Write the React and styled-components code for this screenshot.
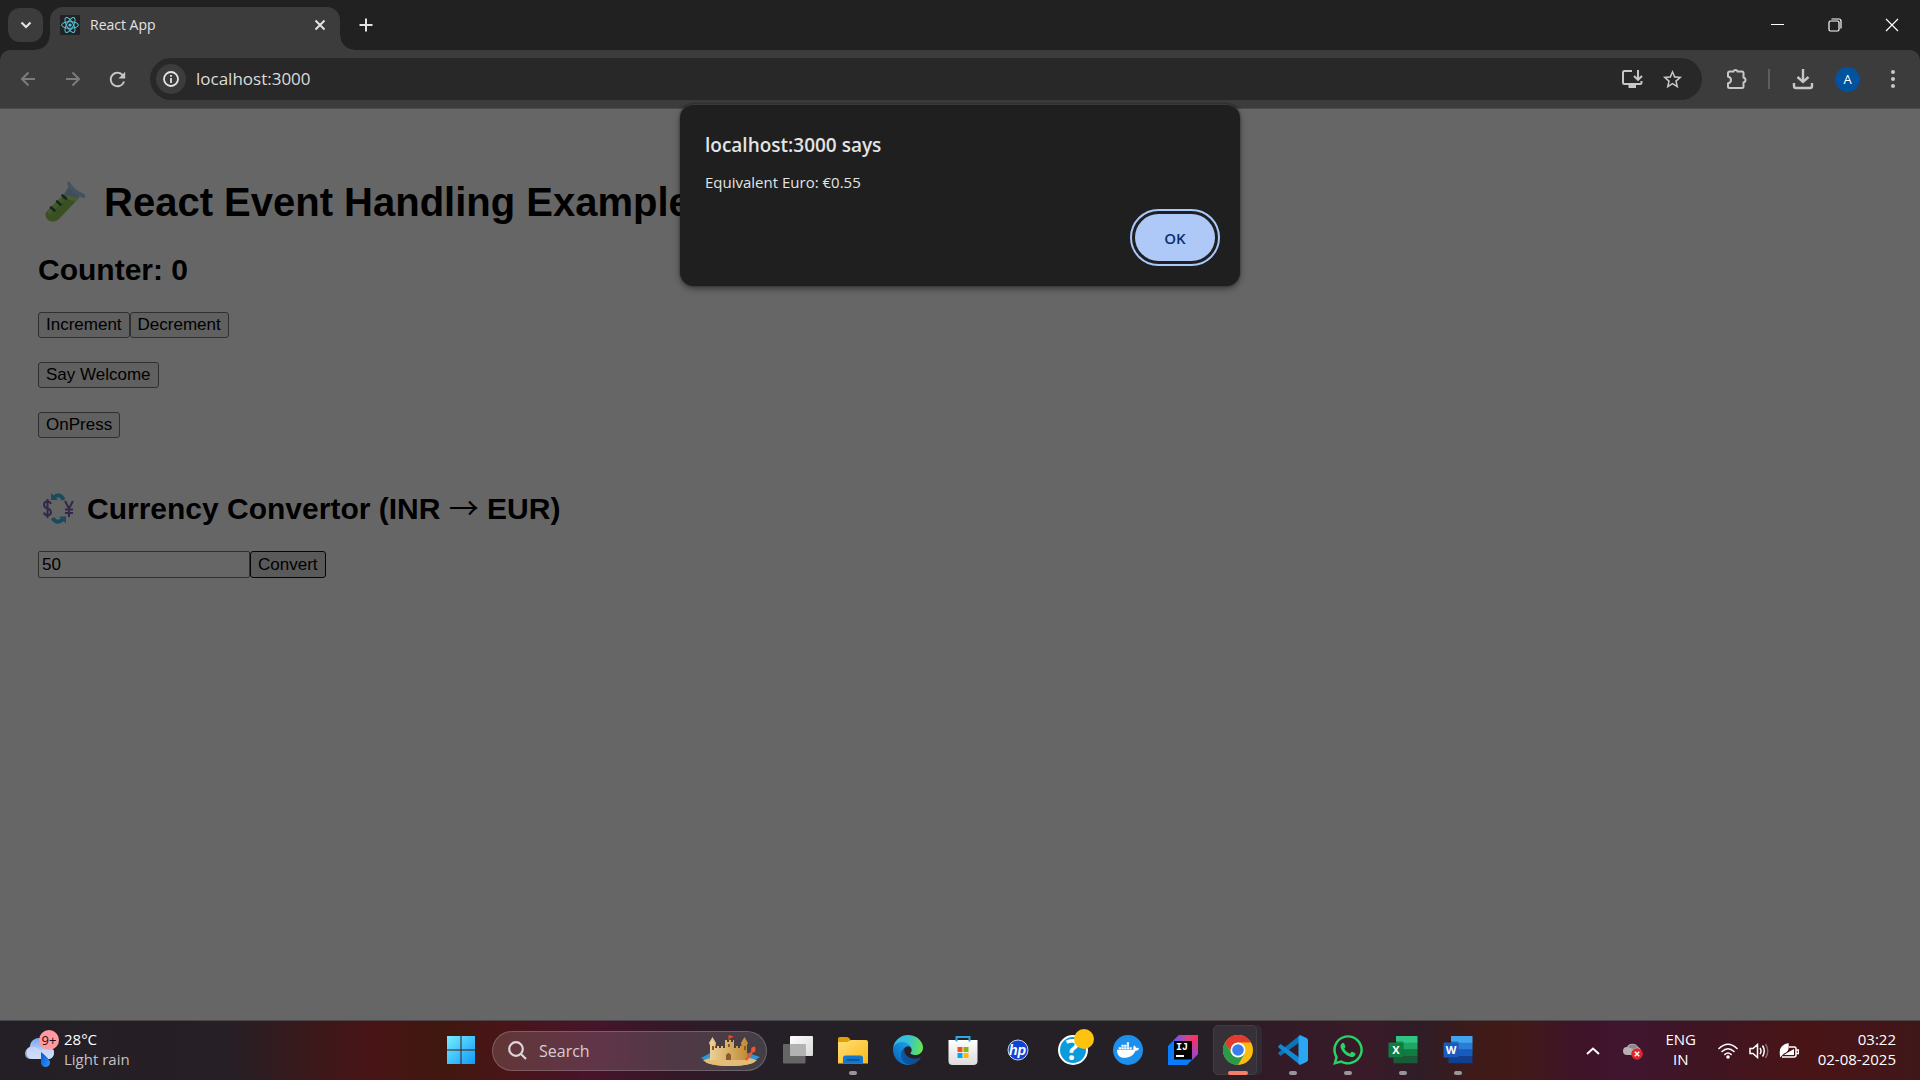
import React, { useState } from "react";
import styled, { createGlobalStyle, css } from "styled-components";
import { MdRefresh, MdStarBorder } from "react-icons/md";
import { FaWhatsapp, FaDocker } from "react-icons/fa";

const ui = `"Segoe UI", "Open Sans", "Noto Sans", sans-serif`;
const arial = `"Liberation Sans", Arial, sans-serif`;

const GlobalStyle = createGlobalStyle`
  *, *::before, *::after { box-sizing: border-box; }
  body { margin: 0; background: #202120; }
  button, input { font: inherit; }
  h1, h2, p { margin: 0; }
  svg { display: block; flex: none; }
`;

const Screen = styled.div`
  min-height: 100vh;
  display: flex;
  flex-direction: column;
  font-family: ${ui};
  font-size: 15px;
  color: #e3e3e3;
`;

const plainButton = css`
  border: 0;
  padding: 0;
  background: none;
  color: inherit;
  display: flex;
  align-items: center;
  justify-content: center;
`;

/* ---------- browser frame ---------- */

const TabStrip = styled.header`
  height: 50px;
  display: flex;
  align-items: flex-start;
  background: #202120;
`;

const TabSearch = styled.button`
  ${plainButton}
  width: 35px;
  height: 34px;
  margin: 8px 7px 0 8px;
  border-radius: 12px;
  background: #3c3c3c;
`;

const Tab = styled.div`
  position: relative;
  width: 290px;
  height: 43px;
  margin-top: 7px;
  padding: 0 8px 7px 10px;
  display: flex;
  align-items: center;
  gap: 10px;
  border-radius: 13px 13px 0 0;
  background: #3c3c3c;

  &::before,
  &::after {
    content: "";
    position: absolute;
    bottom: 0;
    width: 14px;
    height: 14px;
  }
  &::before {
    right: 100%;
    background: radial-gradient(circle at 0 0, transparent 13px, #3c3c3c 14px);
  }
  &::after {
    left: 100%;
    background: radial-gradient(circle at 100% 0, transparent 13px, #3c3c3c 14px);
  }
`;

const TabTitle = styled.span`
  flex: 1;
  font-size: 14px;
  line-height: 20px;
`;

const SmallButton = styled.button`
  ${plainButton}
  width: 24px;
  height: 24px;
`;

const NewTab = styled.button`
  ${plainButton}
  width: 34px;
  height: 34px;
  margin: 8px 0 0 9px;
`;

const WindowControls = styled.div`
  display: flex;
  margin-left: auto;
  height: 49px;
`;

const WindowButton = styled.button`
  ${plainButton}
  width: 57px;
  color: #fff;
`;

const ToolbarWrap = styled.div`
  background: #202120;
`;

const Toolbar = styled.nav`
  height: 59px;
  padding: 0 5px;
  display: flex;
  align-items: center;
  background: #3c3c3c;
  border-bottom: 1px solid #4b4b4b;
  border-radius: 10px 10px 0 0;
`;

const ToolButton = styled.button`
  ${plainButton}
  width: ${(p) => (p.$narrow ? 40 : 45)}px;
  height: 40px;
  color: ${(p) => (p.$off ? "#7c7c7c" : "#c7c7c7")};
`;

const Omnibox = styled.div`
  flex: 1;
  height: 42px;
  margin: 0 12px 0 10px;
  padding: 0 10px 0 6px;
  display: flex;
  align-items: center;
  border-radius: 21px;
  background: #282828;
`;

const SiteInfo = styled.button`
  ${plainButton}
  width: 30px;
  height: 30px;
  border-radius: 50%;
  background: #3c3c3c;
`;

const Address = styled.input`
  flex: 1;
  min-width: 0;
  margin-left: 10px;
  padding: 0;
  border: 0;
  outline: 0;
  background: none;
  color: #dcdcdc;
  font-size: 17px;
  line-height: 24px;
`;

const Divider = styled.span`
  width: 2px;
  height: 20px;
  margin: 0 10px 0 9px;
  background: #5e5e5e;
`;

const Avatar = styled.span`
  width: 25px;
  height: 25px;
  border-radius: 50%;
  background: #00539c;
  color: #fff;
  font-size: 13px;
  line-height: 25px;
  text-align: center;
`;

/* ---------- web page ---------- */

const Viewport = styled.main`
  position: relative;
  flex: 1;
  background: #fff;
`;

const PageBody = styled.div`
  padding: 69px 38px;
  color: #000;
  font-family: ${arial};
`;

const Title = styled.h1`
  display: flex;
  align-items: center;
  gap: 10px;
  margin-bottom: 27px;
  font-size: 40px;
  line-height: 48px;
`;

const Heading = styled.h2`
  display: flex;
  align-items: center;
  gap: 7px;
  margin-bottom: 25px;
  font-size: 30px;
  line-height: 34px;
`;

const Arrow = styled.span`
  font-family: "Noto Sans CJK JP", ${arial};
  font-weight: 400;
  line-height: 1;
`;

const ButtonRows = styled.div`
  display: flex;
  flex-direction: column;
  gap: 24px;
  margin-bottom: 53px;
`;

const Row = styled.div`
  display: flex;
`;

const PageButton = styled.button`
  min-height: 26px;
  padding: 0 7px;
  border: 1px solid ${(p) => (p.$focus ? "#101010" : "#767676")};
  border-radius: 3px;
  background: ${(p) => (p.$focus ? "#e0e0e0" : "#efefef")};
  color: #000;
  font-size: 17px;
  line-height: 24px;
`;

const AmountInput = styled.input`
  width: 212px;
  height: 27px;
  padding: 0 3px;
  border: 1px solid #767676;
  border-radius: 2px;
  background: #fff;
  color: #000;
  font-size: 17px;
`;

const Scrim = styled.div`
  position: absolute;
  inset: 0;
  background: rgba(0, 0, 0, 0.6);
`;

const DialogLayer = styled.div`
  position: absolute;
  inset: -5px 0 auto;
  display: flex;
  justify-content: center;
`;

const Dialog = styled.div`
  width: 560px;
  padding: 28px 25px 25px;
  display: flex;
  flex-direction: column;
  border-radius: 14px;
  background: #1f1f1f;
  box-shadow: 0 0 2px rgba(0, 0, 0, 0.5), 0 3px 6px rgba(0, 0, 0, 0.4);
  border-top: 1px solid #3a3a3a;
`;

const DialogTitle = styled.h2`
  font-size: 19px;
  line-height: 24px;
  font-weight: 600;
`;

const DialogText = styled.p`
  margin-top: 15px;
  font-size: 15px;
  line-height: 20px;
`;

const OkButton = styled.button`
  align-self: flex-end;
  width: 80px;
  height: 47px;
  margin-top: 22px;
  border: 0;
  border-radius: 24px;
  background: #aec9f8;
  color: #0a2e6e;
  font-size: 15px;
  font-weight: 600;
  outline: 2px solid #a8c7fa;
  outline-offset: 3px;
`;

/* ---------- taskbar ---------- */

const Taskbar = styled.footer`
  height: 60px;
  display: grid;
  grid-template-columns: 1fr auto 1fr;
  border-top: 1px solid #484648;
  background: linear-gradient(
    90deg,
    #241f26 0%,
    #261f25 12%,
    #3a191b 16%,
    #491416 19.5%,
    #40180f 23%,
    #491517 26%,
    #47142b 31%,
    #341827 35%,
    #252027 40%,
    #242026 62%,
    #301b26 66%,
    #3a1a28 71%,
    #2f1d26 74%,
    #3f1a18 77%,
    #421a17 79%,
    #3f1428 82%,
    #40152f 85%,
    #3f1522 89%,
    #4a1416 94%,
    #3f171a 100%
  );
  color: #fff;
`;

const Weather = styled.button`
  ${plainButton}
  justify-self: start;
  padding: 0 0 0 24px;
  gap: 5px;
  text-align: left;
`;

const TwoLines = styled.span`
  display: flex;
  flex-direction: column;
  padding-bottom: 4px;
  font-size: 15px;
  line-height: 20px;
  text-align: ${(p) => p.$align || "left"};
`;

const Muted = styled.span`
  color: #c6c1c4;
`;

const Apps = styled.div`
  display: flex;
  align-items: center;
  padding-right: 2px;
`;

const AppButton = styled.button`
  ${plainButton}
  position: relative;
  width: 55px;
  height: 59px;
  padding-bottom: 1px;

  &::after {
    content: "";
    display: ${(p) => (p.$running || p.$active ? "block" : "none")};
    position: absolute;
    bottom: 5px;
    left: 50%;
    width: ${(p) => (p.$active ? 20 : 8)}px;
    height: 4px;
    border-radius: 2px;
    transform: translateX(-50%);
    background: ${(p) => (p.$active ? "#f57f68" : "#9a9599")};
  }
`;

const ActiveTile = styled.span`
  position: absolute;
  left: 3px;
  top: 4px;
  width: 44px;
  height: 50px;
  border: 1px solid #423c43;
  border-radius: 5px;
  background: #363138;
  box-shadow: 5px 0 0 #302b32;
`;

const AppArt = styled.span`
  position: relative;
`;

const SearchBox = styled.label`
  width: 275px;
  height: 40px;
  margin: 0 3px 0 4px;
  padding: 0 6px 0 15px;
  display: flex;
  align-items: center;
  gap: 12px;
  border: 1px solid rgba(255, 255, 255, 0.2);
  border-radius: 20px;
  background: rgba(255, 255, 255, 0.14);
`;

const SearchInput = styled.input`
  flex: 1;
  min-width: 0;
  padding: 0;
  border: 0;
  outline: 0;
  background: none;
  color: #fff;
  font-size: 16px;

  &::placeholder {
    color: #d6cdd3;
    opacity: 1;
  }
`;

const Tray = styled.div`
  justify-self: end;
  display: flex;
  align-items: center;
  padding-right: 24px;
`;

const TrayButton = styled.button`
  ${plainButton}
  width: ${(p) => p.$w}px;
  height: 50px;
`;

const Clock = styled.button`
  ${plainButton}
  padding-left: 8px;
  height: 50px;
`;

/* ---------- small icons ---------- */

const Line = ({ w = 20, h = w, box, d, s = 2, children, ...rest }) => (
  <svg width={w} height={h} viewBox={box || `0 0 ${w} ${h}`} fill="none" stroke="currentColor" strokeWidth={s} aria-hidden="true" {...rest}>
    {d && <path d={d} />}
    {children}
  </svg>
);

const ReactMark = () => (
  <svg width="20" height="20" viewBox="0 0 20 20" aria-hidden="true">
    <rect width="20" height="20" rx="1" fill="#222" />
    <g fill="none" stroke="#58c4dc" strokeWidth="1">
      <ellipse cx="10" cy="10" rx="8.4" ry="3.3" />
      <ellipse cx="10" cy="10" rx="8.4" ry="3.3" transform="rotate(60 10 10)" />
      <ellipse cx="10" cy="10" rx="8.4" ry="3.3" transform="rotate(120 10 10)" />
    </g>
    <circle cx="10" cy="10" r="1.6" fill="#58c4dc" />
  </svg>
);

const TestTube = () => (
  <svg width="56" height="48" viewBox="0 0 56 48" aria-hidden="true">
    <path d="M31 8 L43 17 L39 22 L25 18 Z" fill="#9fc4e4" />
    <path d="M26 17 L41 20 L21 41 Q15 46 10 42 Q5 37 10 32 Z" fill="#92c859" />
    <path d="M26 17 L41 20 L38 23.500 L23.500 19.500 Z" fill="#bfe486" />
    <path d="M10 32 L22 20 L26 22 L12 37 Q9 36 10 32 Z" fill="#a9da6c" />
    <path d="M29.5 4 Q31.500 2.500 33 6 Q36 11 43 14.500 Q48.500 16.500 47 19.500 Q45 21 40 17.500 Q33 14 31 9 Q28.500 6 29.500 4 Z" fill="#a9cbf2" />
    <path d="M24.500 17.500 l3.500 3 M19 23.500 l3.500 3 M13 29.500 l3.500 3" stroke="#27615a" strokeWidth="2.600" strokeLinecap="round" />
  </svg>
);

const CurrencyMark = () => (
  <svg width="42" height="34" viewBox="0 0 42 34" aria-hidden="true">
    <g fill="none" stroke="#46b8e8" strokeWidth="4">
      <path d="M15.500 5.500 Q22 0 25.500 8" />
      <path d="M25 27 Q19 33 14.500 26" />
    </g>
    <path d="M13 1 V8 H20 Z M28 31.500 V24.500 H21 Z" fill="#46b8e8" />
    <path d="M13 12 Q12 9.500 9.500 9.500 Q6 9.500 6 12.800 Q6 15.500 9.500 16.500 Q13 17.500 13 20.200 Q13 23.200 9.500 23.200 Q6.500 23.200 6 20.500 M9.500 7 V26" fill="none" stroke="#7c66b4" strokeWidth="2" />
    <path d="M27 9 L31 16.500 L35 9 M31 16 V25 M27 17.500 H35 M27 21 H35" fill="none" stroke="#7c66b4" strokeWidth="2" />
  </svg>
);

/* ---------- taskbar art ---------- */

const Art = ({ children, size = 30, box = "0 0 30 30" }) => (
  <svg width={size} height={size} viewBox={box} aria-hidden="true">{children}</svg>
);

const WeatherArt = () => (
  <svg width="35" height="44" viewBox="0 0 35 44" aria-hidden="true">
    <defs>
      <linearGradient id="cloud" x1="0" y1="0" x2="0" y2="1"><stop offset="0" stopColor="#7ea6ee" /><stop offset="1" stopColor="#dfe8fb" /></linearGradient>
      <linearGradient id="drop" x1="0" y1="0" x2="1" y2="1"><stop offset="0" stopColor="#0c50d0" /><stop offset="1" stopColor="#2a98ff" /></linearGradient>
    </defs>
    <path d="M7 30 a7 7 0 0 1 -1 -12.500 a8.500 8.500 0 0 1 13 -7 q7 0 8 8.500 a6 6 0 0 1 -2 11 Z" fill="url(#cloud)" />
    <path d="M1 24 q1 -7 9 -6 q5 1 7 4 q6 -4 13 -1 q1 8 -6 9 H7 q-6 0 -6 -6 Z" fill="#cbdaf8" opacity=".75" />
    <path d="M17 23 Q26 30 26 33.500 a4.500 4.500 0 0 1 -9 0 Z" fill="url(#drop)" />
    <circle cx="25" cy="11" r="10" fill="#ff9aa2" />
    <text x="25" y="15.500" textAnchor="middle" fontSize="13" fill="#1c1014" fontFamily='"Open Sans", sans-serif'>9+</text>
  </svg>
);

const StartArt = () => (
  <Art>
    <defs><linearGradient id="win" x1="0" y1="0" x2="30" y2="30" gradientUnits="userSpaceOnUse"><stop offset="0" stopColor="#7af0ff" /><stop offset="1" stopColor="#0a96fa" /></linearGradient></defs>
    <path fill="url(#win)" d="M1 1h13.500v13.500H1zM15.500 1H29v13.500H15.500zM1 15.500h13.500V29H1zM15.500 15.500H29V29H15.500z" />
  </Art>
);

const CastleArt = () => (
  <svg width="60" height="32" viewBox="0 0 60 32" aria-hidden="true">
    <defs><linearGradient id="sand" x1="0" y1="0" x2="1" y2="0"><stop offset="0" stopColor="#ecd39a" /><stop offset="1" stopColor="#c08a35" /></linearGradient></defs>
    <path d="M1 23 L12 17 L48 18 L60 22 L52 27 H8 Z" fill="#2f94d8" />
    <ellipse cx="30" cy="26" rx="25" ry="5" fill="#d9b06a" />
    <path d="M3 25 q27 -6 54 0 q-6 6 -27 6 t-27 -6 Z" fill="#e3bd78" />
    <path d="M10 25 V10 L9 8 L12.500 2 L16 8 L15 13 H17 V11 H19 V13 H21 V11 H23 V13 H25 V5 H27 V7 H29 V5 H31 V7 H33 V5 H34 V13 H36 V11 H38 V13 H40 V11 H42 V13 L41 8 L44.500 2 L48 8 L47 10 V25 Z" fill="url(#sand)" />
    <path d="M26 25 v-5 q2.500 -4 5 0 v5 Z M28 9 h2 v3 h-2 Z M12 11 h2 v4 h-2 Z M44 11 h2 v4 h-2 Z" fill="#8b5b2c" />
    <path d="M28.500 5 V0 L34 1.500 L29.500 3.500 V5 Z" fill="#ee4b2b" />
    <path d="M55 11.500 q-4 0 -4 3.500 q0 2.500 2 2.500 q2.500 0 2.500 -3 Z" fill="#f0532d" />
    <path d="M52 17 L46 25" fill="none" stroke="#f0532d" strokeWidth="2.500" />
  </svg>
);

const TaskViewArt = () => (
  <Art>
    <defs><linearGradient id="tv" x1="0" y1="0" x2="1" y2="1"><stop offset="0" stopColor="#fff" /><stop offset="1" stopColor="#d8d8d8" /></linearGradient></defs>
    <rect x="7" y="1" width="23" height="20" rx="1" fill="url(#tv)" />
    <rect x="0" y="9" width="22.500" height="19.500" rx="1" fill="#777" opacity=".8" />
    <rect x="7" y="9" width="15.500" height="12" fill="#b2b2b2" />
  </Art>
);

const ExplorerArt = () => (
  <Art>
    <defs><linearGradient id="fold" x1="0" y1="0" x2="1" y2="1"><stop offset="0" stopColor="#ffdf78" /><stop offset="1" stopColor="#fbb917" /></linearGradient></defs>
    <path d="M0 4 q0 -2 2 -2 h7 q1.500 0 2.500 1.500 L13 6 V9 H0 Z" fill="#e0a000" />
    <path d="M0 7 H9 L13 5 H28 q2 0 2 2 V28.500 H0 Z" fill="url(#fold)" />
    <path d="M5 28.500 V23 q0 -2.500 2.500 -2.500 h15 q2.500 0 2.500 2.500 v5.500 Z" fill="#1278cd" />
    <path d="M9 25 h12" stroke="#0a4d8f" strokeWidth="1.500" strokeLinecap="round" />
  </Art>
);

const EdgeArt = () => (
  <Art box="0 0 256 256">
    <defs>
      <linearGradient id="e1" x1="63" y1="178" x2="241" y2="178" gradientUnits="userSpaceOnUse"><stop offset="0" stopColor="#0c59a4" /><stop offset="1" stopColor="#114a8b" /></linearGradient>
      <linearGradient id="e2" x1="150" y1="100" x2="40" y2="220" gradientUnits="userSpaceOnUse"><stop offset="0" stopColor="#1b9de2" /><stop offset="1" stopColor="#0a6bc4" /></linearGradient>
      <linearGradient id="e3" x1="20" y1="60" x2="250" y2="110" gradientUnits="userSpaceOnUse"><stop offset="0" stopColor="#35b8e8" /><stop offset=".5" stopColor="#36c5cf" /><stop offset="1" stopColor="#66e552" /></linearGradient>
    </defs>
    <g transform="translate(-4.630 -4.920)">
      <path fill="url(#e1)" d="M235.68 195.46a93.73 93.73 0 0 1-10.54 4.71 101.87 101.87 0 0 1-35.9 6.46c-47.32 0-88.54-32.55-88.54-74.32A31.48 31.48 0 0 1 117.13 105c-42.8 1.8-53.8 46.4-53.8 72.53 0 73.88 68.09 81.37 82.76 81.37 7.91 0 19.84-2.3 27-4.56l1.31-.44a128.34 128.34 0 0 0 66.6-52.8 4 4 0 0 0-5.320-5.640z" />
      <path fill="url(#e2)" d="M110.34 246.34A79.2 79.2 0 0 1 87.6 225a80.72 80.72 0 0 1 29.53-120c3.12-1.47 8.45-4.13 15.54-4a32.35 32.35 0 0 1 25.69 13 31.88 31.88 0 0 1 6.36 18.66c0-.21 24.46-79.6-80-79.6-43.9 0-80 41.66-80 78.21a130.15 130.15 0 0 0 12.11 56 128 128 0 0 0 156.38 67.11 75.55 75.55 0 0 1-62.78-8z" />
      <path fill="url(#e3)" d="M156.94 153.78c-.81 1.05-3.3 2.5-3.3 5.66 0 2.61 1.7 5.12 4.72 7.23 14.38 10 41.49 8.68 41.56 8.68a59.56 59.56 0 0 0 30.27-8.35 61.38 61.38 0 0 0 30.43-52.88c.26-22.41-8-37.31-11.34-43.91C228.09 28.76 182.35 4.92 132.63 4.92a128 128 0 0 0-128 126.2c.48-36.54 36.8-66.05 80-66.05 3.5 0 23.46.34 42 10.07 16.34 8.58 24.9 18.94 30.85 29.21 6.18 10.67 7.28 24.15 7.28 29.52s-2.740 13.330-7.800 19.910z" />
    </g>
  </Art>
);

const StoreArt = () => (
  <Art>
    <defs><linearGradient id="bag" x1="0" y1="0" x2="0" y2="1"><stop offset="0" stopColor="#fff" /><stop offset="1" stopColor="#dcdcdc" /></linearGradient></defs>
    <path d="M.5 5 H29.500 V26 q0 4 -4 4 H4.500 q-4 0 -4 -4 Z" fill="url(#bag)" />
    <path d="M8.500 6.500 V2 H21.500 V6.500" fill="none" stroke="#2ba9e6" strokeWidth="2" />
    <rect x="9.500" y="12" width="5" height="5" fill="#f25022" /><rect x="15.500" y="12" width="5" height="5" fill="#7fba00" />
    <rect x="9.500" y="18" width="5" height="5" fill="#00a4ef" /><rect x="15.500" y="18" width="5" height="5" fill="#ffb900" />
  </Art>
);

const HpArt = () => (
  <Art>
    <circle cx="15" cy="15" r="10" fill="#0f43d8" stroke="#c9d4f2" />
    <text x="14.500" y="19.500" textAnchor="middle" fontSize="14" fontStyle="italic" fontWeight="700" fill="#fff" fontFamily='"Liberation Sans Narrow", "Liberation Sans", sans-serif'>hp</text>
  </Art>
);

const HelpArt = () => (
  <Art size={42} box="-6 -6 42 42">
    <circle cx="15" cy="15" r="14" fill="#0a9bdc" stroke="#fff" strokeWidth="2" />
    <text x="14.500" y="25" textAnchor="middle" fontSize="28" fontWeight="700" fill="#fff" fontFamily='"Open Sans", sans-serif'>?</text>
    <circle cx="26" cy="4" r="10" fill="#ffc20e" />
  </Art>
);

const DockerArt = () => (
  <Art>
    <circle cx="15" cy="15" r="15" fill="#1d8fec" />
    <FaDocker x="4" y="4" size="22" color="#fff" />
  </Art>
);

const IdeaArt = () => (
  <Art>
    <defs>
      <linearGradient id="ij" x1="8" y1="8" x2="30" y2="4" gradientUnits="userSpaceOnUse"><stop offset="0" stopColor="#6b57f5" /><stop offset=".6" stopColor="#e0407f" /><stop offset="1" stopColor="#ff2d5a" /></linearGradient>
      <linearGradient id="ij2" x1="0" y1="0" x2="0" y2="1"><stop offset="0" stopColor="#ff2d5a" /><stop offset="1" stopColor="#8a4be0" /></linearGradient>
    </defs>
    <path d="M11 0 H30 V19 L19 30 H0 V11 Z" fill="#087cfa" />
    <path d="M11 0 H30 V10 L6 8 V5 Z" fill="url(#ij)" />
    <path d="M24 5 L30 2 V19 L24 25 Z" fill="url(#ij2)" />
    <rect x="6" y="6" width="18" height="18.500" fill="#000" />
    <text x="8" y="15" fontSize="10" fontWeight="700" fill="#fff" fontFamily='"Liberation Mono", monospace'>IJ</text>
    <rect x="8" y="20" width="8" height="2" fill="#fff" />
  </Art>
);

const ChromeArt = () => (
  <Art>
    <circle cx="15" cy="15" r="15" fill="#fbbc0f" />
    <path d="M2 7.500 A15 15 0 0 0 15 30 L21.500 18.800 L15 18 L8.500 18.800 Z" fill="#2a9a48" />
    <path d="M2 7.500 L9 19 L12 12 L8 8 Z" fill="#2a9a48" />
    <path d="M2 7.500 A15 15 0 0 1 28 7.500 H15 L8.500 11.500 L7.500 16 Z" fill="#e33b2e" />
    <circle cx="15" cy="15" r="7.500" fill="#fff" />
    <circle cx="15" cy="15" r="5.800" fill="#3b7ded" />
  </Art>
);

const CodeArt = () => (
  <Art>
    <path d="M0 18.500 L2.500 21 L22 7 V0 L1 17 Z" fill="#0b73b8" />
    <path d="M0 11.500 L2.500 9 L22 23 V30 L1 13 Z" fill="#1389d2" />
    <path d="M22 0 L28.500 3 Q30 3.800 30 5.500 V24.500 Q30 26.200 28.500 27 L22 30 L20.500 28 V2 Z" fill="#2aa7f2" />
  </Art>
);

const Office = ({ letter, bands, badge }) => (
  <Art>
    {bands.map((c, i) => (
      <rect key={c} x={i === 3 ? 5.5 : 8} y={1 + i * 6.75} width={i === 3 ? 24 : 21.5} height="7" fill={c} />
    ))}
    <rect x="6" y="6" width="9.500" height="17" fill="#000" opacity=".18" />
    <rect x=".500" y="7.500" width="15" height="15" rx="1" fill={badge} />
    <text x="8" y="19" textAnchor="middle" fontSize="11" fontWeight="700" fill="#fff" fontFamily='"Open Sans", sans-serif'>{letter}</text>
  </Art>
);

const apps = [
  { name: "Task View", art: <TaskViewArt /> },
  { name: "File Explorer", art: <ExplorerArt />, running: true },
  { name: "Microsoft Edge", art: <EdgeArt /> },
  { name: "Microsoft Store", art: <StoreArt /> },
  { name: "HP Smart", art: <HpArt /> },
  { name: "Get Help", art: <HelpArt /> },
  { name: "Docker Desktop", art: <DockerArt /> },
  { name: "IntelliJ IDEA", art: <IdeaArt /> },
  { name: "Google Chrome", art: <ChromeArt />, active: true },
  { name: "Visual Studio Code", art: <CodeArt />, running: true },
  { name: "WhatsApp", art: <FaWhatsapp size={34} color="#25d366" />, running: true },
  { name: "Excel", art: <Office letter="X" badge="#107c41" bands={["#2fc481", "#21a366", "#107c41", "#185c37"]} />, running: true },
  { name: "Word", art: <Office letter="W" badge="#185abd" bands={["#41a5ee", "#2b7cd3", "#185abd", "#103f91"]} />, running: true },
];

function BrowserFrame() {
  return (
    <>
      <TabStrip>
        <TabSearch aria-label="Search tabs"><Line w={12} h={8} d="M1.500 1.500 L6 6 L10.500 1.500" s={2.2} /></TabSearch>
        <Tab>
          <ReactMark />
          <TabTitle>React App</TabTitle>
          <SmallButton aria-label="Close tab"><Line w={12} d="M1.500 1.500 L10.500 10.500 M10.500 1.500 L1.500 10.500" s={2} /></SmallButton>
        </Tab>
        <NewTab aria-label="New tab"><Line w={14} d="M7 .500 V13.500 M.500 7 H13.500" s={2} /></NewTab>
        <WindowControls>
          <WindowButton aria-label="Minimize"><Line w={13} h={1} d="M0 .500 H13" s={1} /></WindowButton>
          <WindowButton aria-label="Restore">
            <Line w={14} s={1.2}>
              <rect x="1" y="3" width="10" height="10" rx="1.500" />
              <path d="M3.500 1 H11 Q13 1 13 3 V10.500" />
            </Line>
          </WindowButton>
          <WindowButton aria-label="Close"><Line w={14} d="M1 1 L13 13 M13 1 L1 13" s={1.2} /></WindowButton>
        </WindowControls>
      </TabStrip>
      <ToolbarWrap>
        <Toolbar aria-label="Browser toolbar">
          <ToolButton $off aria-label="Back"><Line w={16} d="M15 8 H2 M8.500 1.500 L2 8 L8.500 14.500" s={2} /></ToolButton>
          <ToolButton $off aria-label="Forward"><Line w={16} d="M1 8 H14 M7.500 1.500 L14 8 L7.500 14.500" s={2} /></ToolButton>
          <ToolButton aria-label="Reload"><MdRefresh size={23} /></ToolButton>
          <Omnibox>
            <SiteInfo aria-label="Site information">
              <Line w={16} s={1.800}><circle cx="8" cy="8" r="7" /><path d="M8 7 V12 M8 4 V5.700" /></Line>
            </SiteInfo>
            <Address aria-label="Address" defaultValue="localhost:3000" />
            <ToolButton $narrow aria-label="Install app">
              <Line w={22} h={20} s={2}>
                <path d="M11 2 H3.500 Q2 2 2 3.500 V13.500 Q2 15 3.500 15 H19 Q20.500 15 20.500 13.500 V12" />
                <path d="M17 1 V10.500 M13 7 L17 10.800 L21 7" />
                <path d="M7.500 17.500 H15" strokeWidth="3" />
              </Line>
            </ToolButton>
            <ToolButton $narrow aria-label="Bookmark"><MdStarBorder size={23} /></ToolButton>
          </Omnibox>
          <ToolButton aria-label="Extensions">
            <Line w={22} s={2}>
              <path d="M4 3.500 H7.500 Q8 2 9.500 2 T11.500 3.500 H16 Q17.500 3.500 17.500 5 V9.500 Q19.500 10 19.500 12 T17.500 14.500 V18.500 Q17.500 20 16 20 H3.500 Q2 20 2 18.500 V15.500 Q5 14.500 5 12 T2 8.500 V5 Q2 3.500 4 3.500 Z" />
            </Line>
          </ToolButton>
          <Divider />
          <ToolButton aria-label="Downloads"><Line w={22} d="M11 1 V14 M5.500 9 L11 14 L16.500 9 M2 15 V18 Q2 20 4 20 H18 Q20 20 20 18 V15" s={2.4} /></ToolButton>
          <ToolButton aria-label="Profile"><Avatar>A</Avatar></ToolButton>
          <ToolButton aria-label="Menu">
            <svg width="4" height="18" viewBox="0 0 4 18" fill="currentColor" aria-hidden="true"><circle cx="2" cy="2" r="2" /><circle cx="2" cy="9" r="2" /><circle cx="2" cy="16" r="2" /></svg>
          </ToolButton>
        </Toolbar>
      </ToolbarWrap>
    </>
  );
}

function DesktopBar() {
  return (
    <Taskbar>
      <Weather>
        <WeatherArt />
        <TwoLines><span>28°C</span><Muted>Light rain</Muted></TwoLines>
      </Weather>
      <Apps>
        <AppButton aria-label="Start"><StartArt /></AppButton>
        <SearchBox>
          <Line w={19} s={2.2} color="#dcd5da"><circle cx="8" cy="8" r="6.800" /><path d="M13 13 L18 18" /></Line>
          <SearchInput aria-label="Search" placeholder="Search" />
          <CastleArt />
        </SearchBox>
        {apps.map((a) => (
          <AppButton key={a.name} aria-label={a.name} $running={a.running} $active={a.active}>
            {a.active && <ActiveTile />}
            <AppArt>{a.art}</AppArt>
          </AppButton>
        ))}
      </Apps>
      <Tray>
        <TrayButton $w={34} aria-label="Show hidden icons"><Line w={14} h={8} d="M1 7 L7 1.500 L13 7" s={2} /></TrayButton>
        <TrayButton $w={46} aria-label="OneDrive">
          <svg width="20" height="18" viewBox="0 0 20 18" aria-hidden="true">
            <path d="M4 13 a4 4 0 0 1 0 -8 a6 5.500 0 0 1 11 0 q4 1 3 8 Z" fill="#b9b0b6" />
            <path d="M5 5 a6 5.500 0 0 1 10 0 l-5 2 Z" fill="#8f868d" />
            <circle cx="14" cy="12" r="5.800" fill="#e0262c" />
            <path d="M11.800 9.800 l4.400 4.400 m0 -4.400 l-4.400 4.400" stroke="#fff" strokeWidth="1.500" />
          </svg>
        </TrayButton>
        <TrayButton $w={50}><TwoLines $align="center"><span>ENG</span><span>IN</span></TwoLines></TrayButton>
        <TrayButton $w={44} aria-label="Network">
          <Line w={20} h={16} s={1.600} strokeLinecap="round">
            <path d="M1 5.500 Q10 -3 19 5.500 M4 8.500 Q10 3 16 8.500 M6.800 11.500 Q10 8.500 13.200 11.500" />
            <circle cx="10" cy="14" r="1" />
          </Line>
        </TrayButton>
        <TrayButton $w={18} aria-label="Volume">
          <Line w={20} h={16} s={1.500}>
            <path d="M1 5.500 H4 L8.500 1.500 V14.500 L4 10.500 H1 Z M11 5 Q13 8 11 11 M13.500 2.500 Q17 8 13.500 13.500" />
            <path d="M16.500 1 Q21 8 16.500 15" opacity=".35" />
          </Line>
        </TrayButton>
        <TrayButton $w={42} aria-label="Battery">
          <Line w={20} h={17} s={1.500}>
            <path d="M10 5 H15.500 Q17 5 17 6.500 V13 Q17 15 15 15 H3 M17.500 8 H19.500 V11.500 H17.500" />
            <path d="M1 13.500 Q-1 3 9.500 1 Q11 10 5 11.500 L1 15.500 Z M8 11 L15 7 V13 H5 Z" fill="currentColor" stroke="none" />
          </Line>
        </TrayButton>
        <Clock><TwoLines $align="right"><span>03:22</span><span>02-08-2025</span></TwoLines></Clock>
      </Tray>
    </Taskbar>
  );
}

export default function App() {
  const [amount, setAmount] = useState("50");
  return (
    <Screen>
      <GlobalStyle />
      <BrowserFrame />
      <Viewport>
        <PageBody>
          <Title><TestTube />React Event Handling Example</Title>
          <Heading>Counter: 0</Heading>
          <ButtonRows>
            <Row><PageButton>Increment</PageButton><PageButton>Decrement</PageButton></Row>
            <Row><PageButton>Say Welcome</PageButton></Row>
            <Row><PageButton>OnPress</PageButton></Row>
          </ButtonRows>
          <Heading>
            <CurrencyMark />
            <span>Currency Convertor (INR <Arrow>→</Arrow> EUR)</span>
          </Heading>
          <Row>
            <AmountInput aria-label="Amount in INR" value={amount} onChange={(e) => setAmount(e.target.value)} />
            <PageButton $focus>Convert</PageButton>
          </Row>
        </PageBody>
        <Scrim />
        <DialogLayer>
          <Dialog role="alertdialog" aria-labelledby="says">
            <DialogTitle id="says">localhost:3000 says</DialogTitle>
            <DialogText>Equivalent Euro: €0.55</DialogText>
            <OkButton>OK</OkButton>
          </Dialog>
        </DialogLayer>
      </Viewport>
      <DesktopBar />
    </Screen>
  );
}
